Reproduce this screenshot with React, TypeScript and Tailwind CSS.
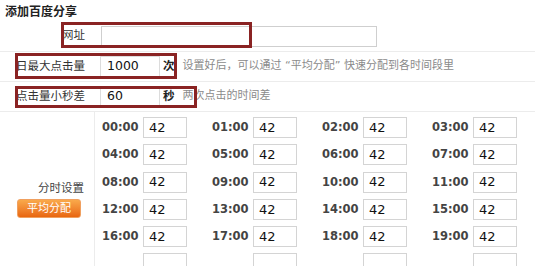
import React from 'react';

const hours = Array.from({ length: 20 }, (_, i) => `${String(i).padStart(2, '0')}:00`);

const FieldLabel: React.FC<{ children: React.ReactNode }> = ({ children }) => (
  <div className="w-[95px] shrink-0 pr-[10px] text-right text-[11.5px] text-[#333]">{children}</div>
);

const App: React.FC = () => {
  return (
    <div className="relative w-[535px] h-[266px] overflow-hidden bg-white font-['DejaVu_Sans','Noto_Sans_CJK_SC',sans-serif] text-[#333]">
      {/* Title */}
      <div className="h-[21px] pl-[5px] pt-[4px] text-[12px] font-bold leading-[16px] text-[#222]">添加百度分享</div>

      {/* URL */}
      <div className="flex h-[31px] items-center border-b border-[#ececec]">
        <FieldLabel>网址</FieldLabel>
        <div className="ml-[6px] h-[21px] w-[276px] border border-[#cfcfcf] bg-white" />
      </div>

      {/* Daily max clicks */}
      <div className="flex h-[30px] items-center border-b border-[#ececec]">
        <FieldLabel>日最大点击量</FieldLabel>
        <div className="ml-[5px] flex h-[21px] w-[60px] items-center border border-[#dcdcdc] pl-[6px] text-[12.5px] text-[#111]">1000</div>
        <span className="ml-[3px] text-[11.5px] font-bold text-[#222]">次</span>
        <span className="ml-[8px] text-[11px] text-[#8a8a8a]">设置好后，可以通过 “平均分配” 快速分配到各时间段里</span>
      </div>

      {/* Min interval */}
      <div className="flex h-[30px] items-center border-b border-[#ececec]">
        <FieldLabel>点击量小秒差</FieldLabel>
        <div className="ml-[5px] flex h-[21px] w-[60px] items-center border border-[#dcdcdc] pl-[6px] text-[12.5px] text-[#111]">60</div>
        <span className="ml-[3px] text-[11.5px] font-bold text-[#222]">秒</span>
        <span className="ml-[8px] text-[11px] text-[#8a8a8a]">两次点击的时间差</span>
      </div>

      {/* Hourly allocation */}
      <div className="flex">
        <div className="flex w-[95px] shrink-0 flex-col justify-center border-r border-[#ececec] pt-[8px]">
          <div className="pr-[10px] text-right text-[11.5px] leading-[16px] text-[#444]">分时设置</div>
          <button className="ml-[17px] mt-[3px] h-[19px] w-[64px] rounded-[3px] border border-[#f0a060] bg-gradient-to-b from-[#f9a94a] to-[#e8660e] text-[11px] leading-[17px] text-white">
            平均分配
          </button>
        </div>
        <div className="grid grid-cols-[repeat(4,110px)] auto-rows-[27.25px] pl-[7px] pt-[2px]">
          {hours.map(h => (
            <div key={h} className="flex items-center">
              <span className="w-[36px] text-[11.5px] font-bold text-[#444]">{h}</span>
              <div className="ml-[5px] flex h-[21px] w-[44px] items-center border border-[#d4d4d4] pl-[5px] text-[13px] text-[#111]">42</div>
            </div>
          ))}
          {/* next row, cut off by the crop */}
          {[0, 1, 2, 3].map(i => (
            <div key={i} className="flex items-center">
              <div className="ml-[41px] h-[21px] w-[44px] border border-[#d4d4d4]" />
            </div>
          ))}
        </div>
      </div>

      {/* Annotation boxes */}
      <div className="pointer-events-none absolute left-[61px] top-[22px] h-[26px] w-[191px] border-[3px] border-[#8a2323]" />
      <div className="pointer-events-none absolute left-[15px] top-[53px] h-[26px] w-[162px] border-[3px] border-[#8a2323]" />
      <div className="pointer-events-none absolute left-[15px] top-[86px] h-[22px] w-[182px] border-[3px] border-[#8a2323]" />
    </div>
  );
};

export default App;
